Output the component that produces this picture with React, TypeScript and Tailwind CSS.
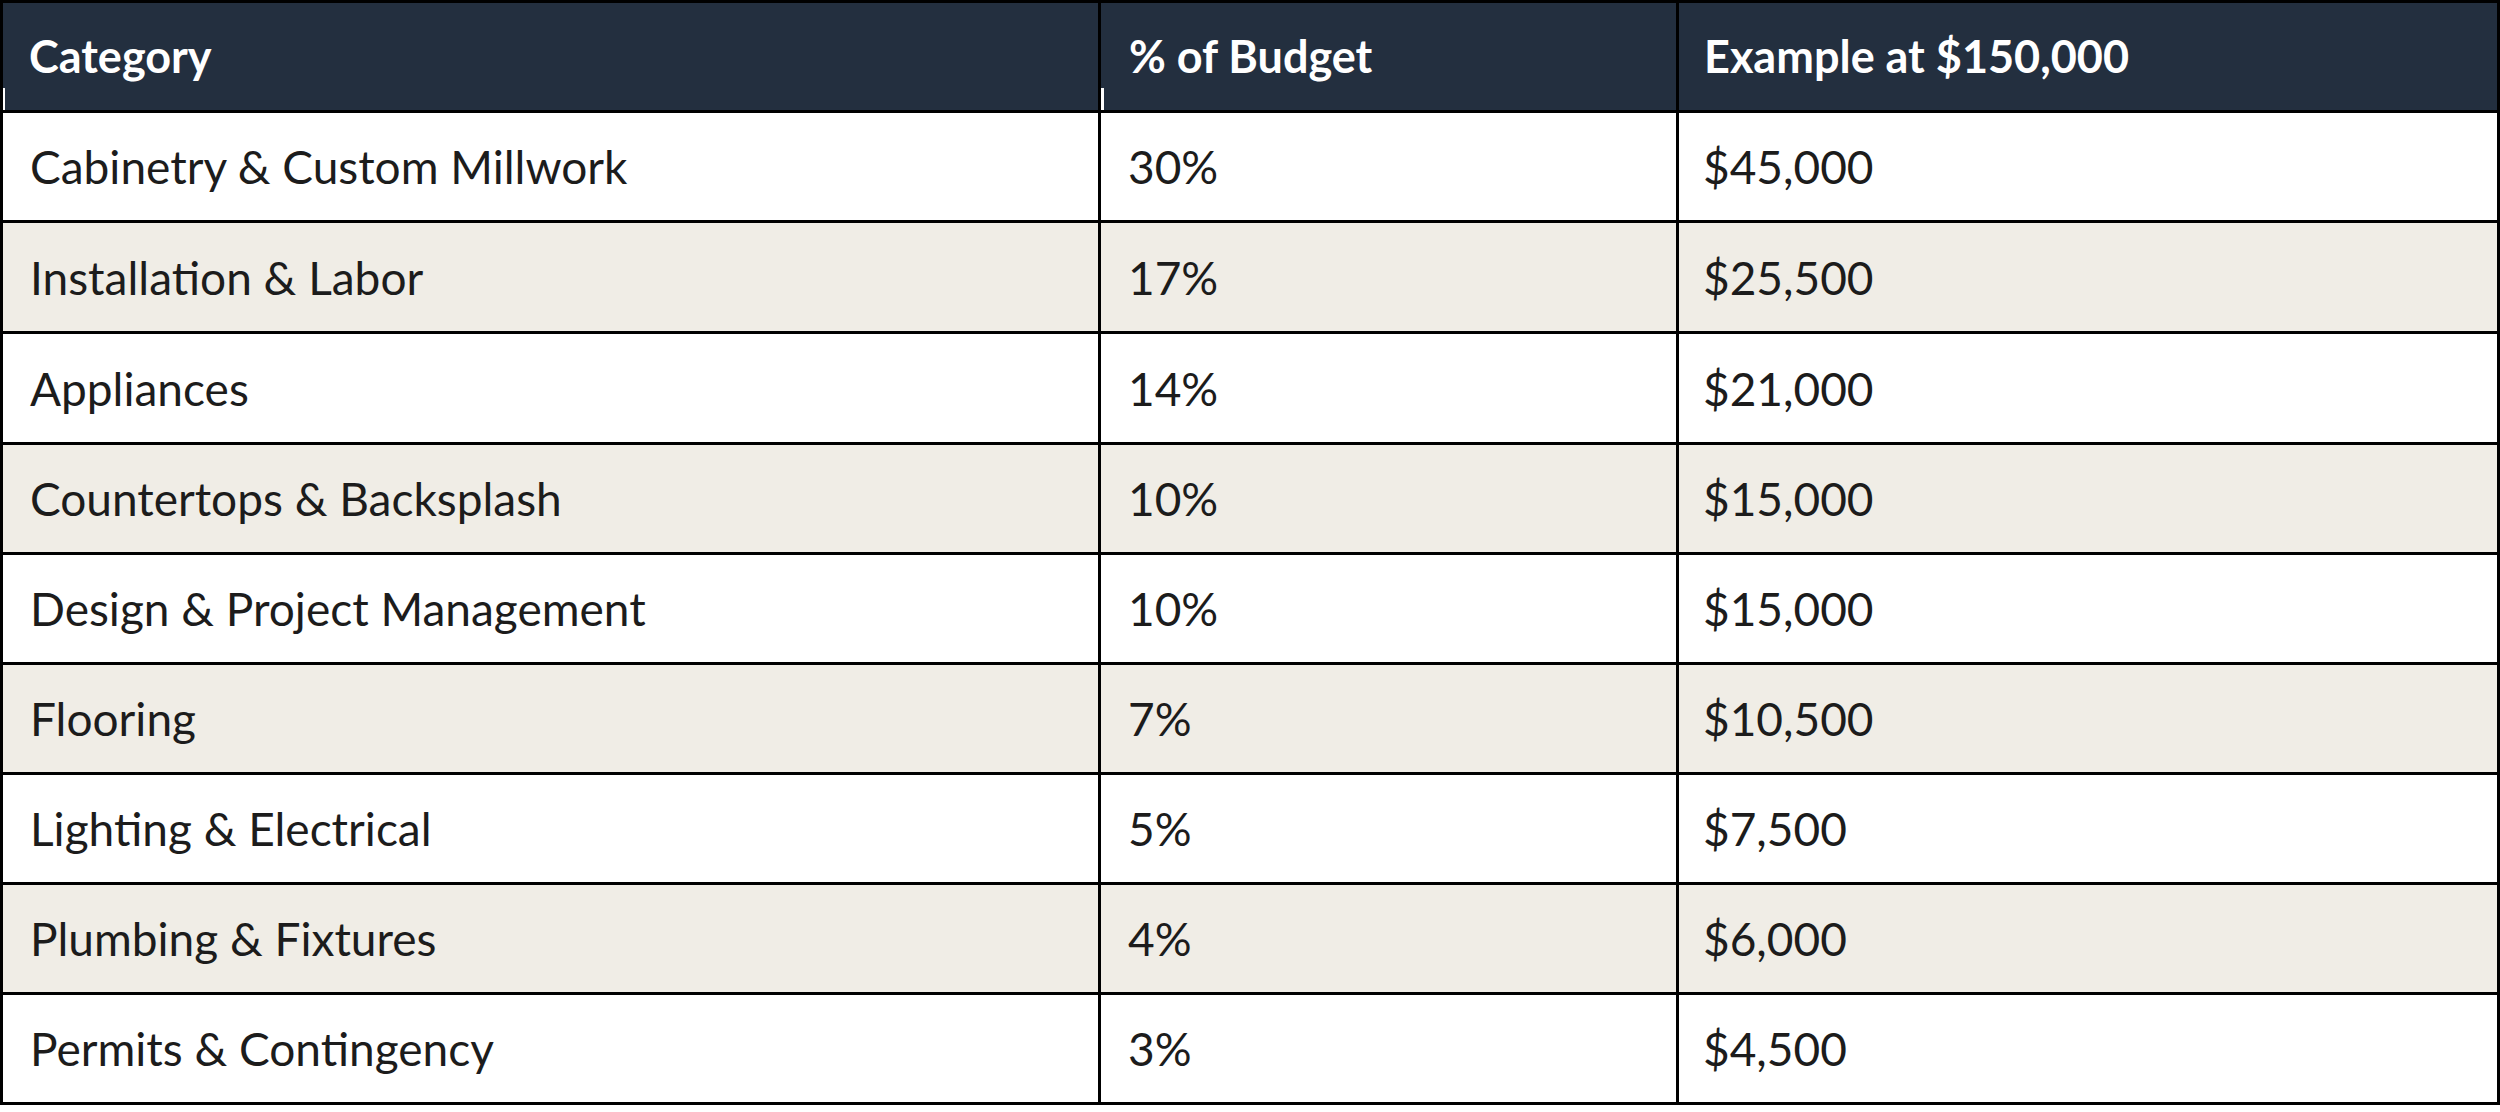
import React from "react";

const rows: [string, string, string][] = [
  ["Cabinetry & Custom Millwork", "30%", "$45,000"],
  ["Installation & Labor", "17%", "$25,500"],
  ["Appliances", "14%", "$21,000"],
  ["Countertops & Backsplash", "10%", "$15,000"],
  ["Design & Project Management", "10%", "$15,000"],
  ["Flooring", "7%", "$10,500"],
  ["Lighting & Electrical", "5%", "$7,500"],
  ["Plumbing & Fixtures", "4%", "$6,000"],
  ["Permits & Contingency", "3%", "$4,500"],
];

const heights = [
  "h-[110px]",
  "h-[111px]",
  "h-[111px]",
  "h-[110px]",
  "h-[110px]",
  "h-[110px]",
  "h-[110px]",
  "h-[110px]",
  "h-[110px]",
];

export default function App() {
  return (
    <div
      className="w-[2500px] h-[1112px] bg-white"
      style={{ fontFamily: "Lato, 'Noto Sans', sans-serif" }}
    >
      <div className="w-[2500px] border-[3px] border-black flex flex-col">
        <div className="grid grid-cols-[1095px_578px_822px] h-[107px] bg-[#232f3f] text-white font-bold text-[45px]">
          <div className="relative flex items-center pl-[26px]">
            Category
            <span className="absolute left-0 top-[85px] w-[2px] h-[22px] bg-white" />
          </div>
          <div className="relative flex items-center pl-[28px] border-l-[3px] border-black">
            % of Budget
            <span className="absolute left-0 top-[85px] w-[3px] h-[22px] bg-white" />
          </div>
          <div className="flex items-center pl-[25px] border-l-[3px] border-black">
            Example at $150,000
          </div>
        </div>
        {rows.map((r, i) => (
          <div
            key={i}
            className={
              "grid grid-cols-[1095px_578px_822px] border-t-[3px] border-black text-[46px] text-[#1c1c1c] " +
              heights[i] +
              " " +
              (i % 2 === 1 ? "bg-[#f0ede6]" : "bg-white")
            }
          >
            <div className="flex items-center pl-[27px]">{r[0]}</div>
            <div className="flex items-center pl-[27px] border-l-[3px] border-black">
              {r[1]}
            </div>
            <div className="flex items-center pl-[24px] border-l-[3px] border-black">
              {r[2]}
            </div>
          </div>
        ))}
      </div>
    </div>
  );
}
